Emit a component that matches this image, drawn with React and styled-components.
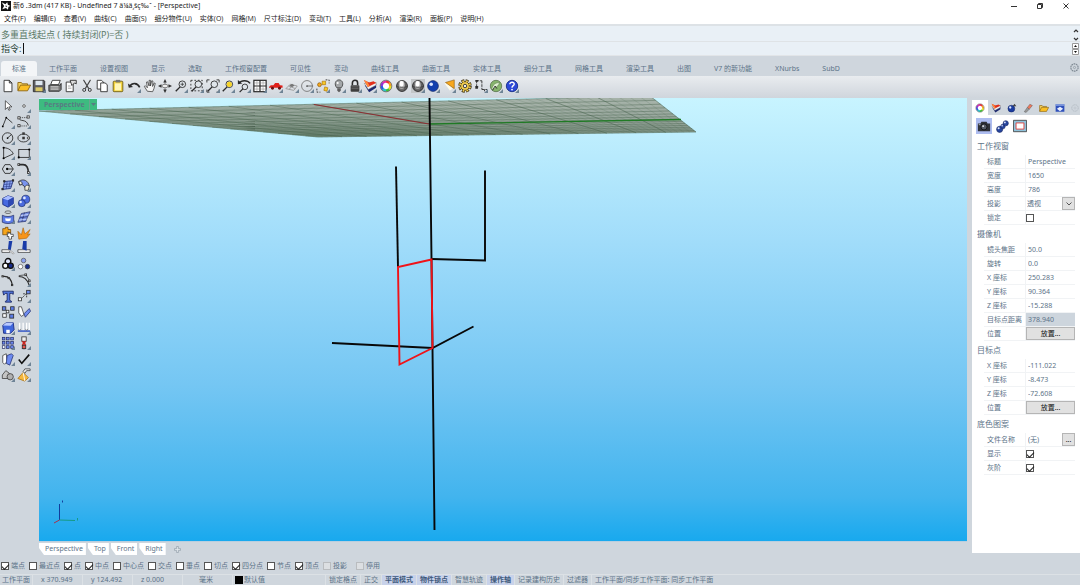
import React, { useState } from 'react';
import styled, { createGlobalStyle } from 'styled-components';

/* ---------- data ---------- */

const menus = ['文件(F)', '编辑(E)', '查看(V)', '曲线(C)', '曲面(S)', '细分物件(U)', '实体(O)', '网格(M)', '尺寸标注(D)', '变动(T)', '工具(L)', '分析(A)', '渲染(R)', '面板(P)', '说明(H)'];

const toolTabs = ['标准', '工作平面', '设置视图', '显示', '选取', '工作视窗配置', '可见性', '变动', '曲线工具', '曲面工具', '实体工具', '细分工具', '网格工具', '渲染工具', '出图', 'V7 的新功能', 'XNurbs', 'SubD'];

const viewTabs = ['Perspective', 'Top', 'Front', 'Right'];

const snaps = [
  ['端点', true], ['最近点', false], ['点', true], ['中点', true], ['中心点', false], ['交点', false],
  ['垂点', false], ['切点', false], ['四分点', true], ['节点', false], ['顶点', true],
];

const statusToggles = [
  ['锁定格点', false], ['正交', false], ['平面模式', true], ['物件锁点', true], ['智慧轨迹', false],
  ['操作轴', true], ['记录建构历史', false], ['过滤器', false],
];

/* ---------- icons (16 x 16 each) ---------- */

const K = '#2b2b2b';
const line = { fill: 'none', stroke: K, strokeWidth: 1 };
const corner = <path d="M16 11.5V16h-4.5z" fill="#6f8496" />;
const magnifier = <><circle cx="9.5" cy="6" r="3.8" fill="#dfe5ea" stroke={K} strokeWidth="1" /><path d="M7 9l-5 5" stroke={K} strokeWidth="1.600" /></>;
const ball = (x, y, r, c = '#2f55c8') => <><circle cx={x} cy={y} r={r} fill={c} stroke="#16245c" strokeWidth=".7" /><circle cx={x - r / 3} cy={y - r / 3} r={r / 3} fill="#dfe8ff" /></>;
const box = (x, y, s = 3.5, c = '#fff') => <rect x={x} y={y} width={s} height={s} fill={c} stroke={K} strokeWidth=".9" />;
const shaded = (
  <>
    <circle cx="8" cy="8" r="6.200" fill="#6d6d6d" stroke="#222" />
    <ellipse cx="7.500" cy="6.500" rx="4" ry="4.500" fill="#bdbdbd" />
    <ellipse cx="7.500" cy="5.500" rx="2.200" ry="3.200" fill="#fff" />
    <path d="M2 8.500c4 1.500 8 1.500 12 0" fill="none" stroke="#333" strokeWidth=".7" />
    <path d="M10.500 2.500c1.500 3 1.500 8 0 11M5 2.500c-1.500 3-1.500 8 0 11" fill="none" stroke="#444" strokeWidth=".7" />
  </>
);
const wheel = (
  <g fill="none" strokeWidth="2.800">
    <circle cx="8" cy="8" r="4" fill="#fff" />
    {['#e33', '#f5a11c', '#e8e021', '#3fc23a', '#2cc3c9', '#2c5be0', '#8a35d6', '#e02fa8'].map((c, i) => (
      <circle key={c} cx="8" cy="8" r="5" stroke={c} strokeDasharray="4.100 30" transform={`rotate(${i * 45 - 90} 8 8)`} />
    ))}
    <circle cx="8" cy="8" r="6.700" stroke="#444" strokeWidth=".7" />
  </g>
);
const layers = (
  <>
    <path d="M2 7l5 8 8-5V6z" fill="#1d2a70" />
    <path d="M1.500 5L6 12l9-5V4z" fill="#eef1f5" stroke="#555" strokeWidth=".5" />
    <path d="M1 1l4.500 8L15 4.500 12 2.500 7 4z" fill="#e2301c" />
    <path d="M1 1l4.500 8 2-1L5 3z" fill="#ff8a3c" />
  </>
);
const folder = <><path d="M1 13V4h4l1 1.500h6V7" fill="#f6d25c" stroke="#8a6410" /><path d="M1 13.500L4 7h11.500L12 13.500z" fill="#fbbf24" stroke="#8a6410" /></>;
const gear = <><circle cx="8" cy="8" r="6.500" fill="none" stroke="#7c8791" strokeWidth="2" strokeDasharray="3 1" /><circle cx="8" cy="8" r="2" fill="none" stroke="#7c8791" /></>;

const topIcons = [
  ['新建', <path d="M3.500 1.500h6l3 3v10h-9zM9.500 1.500v3h3" fill="#fff" stroke={K} />],
  ['打开', folder],
  ['保存', <><path d="M1.500 1.500h12l1 1v12h-13z" fill="#5c5c62" stroke={K} /><path d="M4 2h8v5H4z" fill="#dce6ef" /><path d="M4 9.500h8V14H4z" fill="#d8c766" />{corner}</>],
  ['打印', <><path d="M5 1.500h9l-2 5H3z" fill="#fff" stroke={K} /><path d="M1 7h13l1-2v7l-2 2H1z" fill="#777" stroke={K} /><path d="M3 9h9M3 11.500h9" stroke="#eee" /></>],
  ['属性', <><path d="M2.500 3.500h8v11h-8z" fill="#fff" stroke={K} /><path d="M7 1.500h7v4l-2-1-3 3z" fill="#ddd" stroke={K} /><path d="M4.500 8h3M4.500 10.500h4" stroke="#999" /></>],
  ['剪切', <><path d="M4 1l6 10M12 1L6 11" stroke="#444" strokeWidth="1.200" /><circle cx="4.800" cy="12.500" r="1.700" {...line} /><circle cx="11.200" cy="12.500" r="1.700" {...line} /></>],
  ['复制', <><path d="M2.500 1.500h5l2 2v8h-7z" fill="#fff" stroke={K} /><path d="M6.500 4.500h5l2.500 2v8H6.500z" fill="#fff" stroke={K} /></>],
  ['粘贴', <><rect x="2.500" y="2.500" width="11" height="12" rx="1" fill="#f3d23b" stroke="#6b5a13" /><path d="M4.500 5h7v8h-7z" fill="#fff6b8" /><path d="M5.500 1h5v3h-5z" fill="#777" /></>],
  ['撤销', <><path d="M1 5l1 5 5-1z" fill={K} /><path d="M3 8.500C6 4 12 4 14.500 9.500" fill="none" stroke={K} strokeWidth="1.800" />{corner}</>],
  ['平移', <path d="M5 14L1.500 8.500l1.200-.8L5 10 4 3.500l1.300-.3L7 8V1.500h1.500V8l1.500-6 1.300.3L11 8.500l1.800-4 1.200.5L12.500 11 11 14.500z" fill="#f4f4f4" stroke={K} strokeWidth=".8" />],
  ['旋转视图', <><path d="M8 3v10M3 8h10" stroke="#777" /><path d="M8 0l2 4H6zM8 16l-2-4h4zM0 8l4-2v4zM16 8l-4 2V6z" fill="#333" /><ellipse cx="8" cy="8" rx="3.500" ry="2" fill="#eee" stroke="#777" /></>],
  ['缩放', <>{magnifier}<path d="M7.500 6h4M9.500 8V4" stroke={K} strokeWidth=".8" />{corner}</>],
  ['框选缩放', <><path d="M1 1.500h13v12H1z" fill="none" stroke={K} strokeDasharray="2 2" />{magnifier}{corner}</>],
  ['缩放至范围', <><path d="M1 4V1h3M12 1h3v3M15 12v3h-3M4 15H1v-3" {...line} />{magnifier}{corner}</>],
  ['缩放选取物件', <>{magnifier}<circle cx="9.500" cy="6" r="3" fill="#f7d428" />{corner}</>],
  ['复原视图', <><path d="M1 1l0 5 5-1z" fill={K} /><path d="M2 5c3-4 10-4 13 0" fill="none" stroke={K} strokeWidth="1.600" /><circle cx="9" cy="9" r="3.200" fill="#dfe5ea" stroke={K} /><path d="M7 11l-4 4" stroke={K} strokeWidth="1.500" />{corner}</>],
  ['四视图', <><rect x="1" y="1.500" width="14" height="13" fill="#fff" stroke={K} strokeWidth="1.400" /><path d="M8 1v13M1 8h14" stroke={K} strokeWidth="1.400" /><path d="M2 4.500h12M2 11.500h12M4.500 2v12M11.500 2v12" stroke="#888" strokeWidth=".6" />{corner}</>],
  ['设置视图', <><path d="M0 9l2-2h3l2-2.500h4L12.500 7l3 .5V10H0z" fill="#e0201a" /><circle cx="4" cy="10.500" r="1.700" fill="#611" /><circle cx="12" cy="10.500" r="1.700" fill="#611" />{corner}</>],
  ['工作平面', <><path d="M1 11l5-5 8 2-4 5zM4 8l8 3M8 6l-3 6" fill="none" stroke="#999" /><path d="M5 7.500l3-2 3 2-3 2z" fill="#777" />{corner}</>],
  ['圆', <><circle cx="8" cy="8" r="6.200" {...line} stroke="#777" /><path d="M8 8h7" stroke="#666" /><circle cx="8" cy="8" r="1" fill="#555" />{corner}</>],
  ['选取', <><path d="M11 1h4v4M1 11v4h4" {...line} strokeDasharray="2 1.500" /><path d="M7 2.500h4v4H7zM10 9l3.500 1-1 4-3.500-1z" fill="#f7c926" stroke="#a66b00" strokeWidth=".7" /><circle cx="4" cy="6.500" r="2.200" fill="#f6a71c" stroke="#7c4b00" strokeWidth=".7" />{corner}</>],
  ['隐藏', <><path d="M5.500 10C2 6 4 1 8 1s6 5 2.500 9z" fill="#a4a7a9" stroke="#444" /><path d="M6 10.500h4v3L8 15l-2-1.500z" fill="#5d5d5d" /><circle cx="6.500" cy="4.500" r="1.200" fill="#fff" />{corner}</>],
  ['锁定', <><path d="M5 7V4.500a3 3 0 016 0V7" {...line} strokeWidth="1.800" /><rect x="3" y="7" width="10" height="7.500" rx="1" fill="#3e3e3e" /><path d="M4 9h8M4 11h8" stroke="#888" strokeWidth=".6" />{corner}</>],
  ['图层', <>{layers}{corner}</>],
  ['颜色', wheel],
  ['着色', shaded],
  ['线框', <><path d="M0 0h16v16H0z" fill="#c3c6c8" />{shaded}{corner}</>],
  ['渲染', <>{ball(8, 8, 6.2, '#123fae')}{corner}</>],
  ['灯光', <><path d="M3 5l5-1 4 7-3 2z" fill="#fffbe8" /><path d="M4 4l10-3 0 10z" fill="#f8a81e" stroke="#8c5b0b" strokeWidth=".7" />{corner}</>],
  ['选项', <><circle cx="8" cy="8" r="6" fill="none" stroke="#3f3315" strokeWidth="3.400" strokeDasharray="3.200 1.512" /><circle cx="8" cy="8" r="5" fill="#f3cf52" stroke="#4f3f10" /><circle cx="8" cy="8" r="5.800" fill="none" stroke="#f3cf52" strokeWidth="2" strokeDasharray="1.800 2.755" strokeDashoffset="-.7" /><circle cx="8" cy="8" r="2" fill="#eee" stroke={K} /></>],
  ['尺寸标注', <><path d="M3 2v7h2M3 2h6M9 2v10M9 12h6M12 12v2" {...line} strokeDasharray="3 1" /><path d="M1.500 8h3v3h-3zM1.500 1h3v2h-3z" fill={K} />{corner}</>],
  ['Grasshopper', <><circle cx="8" cy="8" r="6.500" fill="#86b56c" stroke="#607a55" /><path d="M3 12c1-6 5-8 9-8-1 4-3 5-5 6" fill="#dff0d2" stroke="#5b7a4c" strokeWidth=".7" /><path d="M4 13l3-5 2 3" {...line} />{corner}</>],
  ['说明', <><circle cx="8" cy="8" r="6.500" fill="#2c49d8" stroke="#132a85" /><path d="M5.500 6C5.500 2.800 10.800 3 10.500 6 10.300 7.600 8 7.700 8 10" fill="none" stroke="#fff" strokeWidth="1.600" /><circle cx="8" cy="12" r="1" fill="#fff" />{corner}</>],
];

const sideIcons = [
  ['选择', <path d="M5 2v10l2.500-2.500L9 13l1.500-.8L9 9h3.500z" fill="#fff" stroke={K} strokeWidth=".8" />],
  ['点', <><circle cx="8" cy="8" r="1.500" fill="#fff" stroke="#555" />{corner}</>],
  ['多重直线', <><path d="M2 13L6 3l7 6" {...line} />{corner}<circle cx="2" cy="13" r="1" /><circle cx="6" cy="3" r="1" /></>],
  ['控制点曲线', <><path d="M2.500 3C3 9 10 3 13 12" {...line} /><path d="M3 3l10 0M2.500 12.500h10" stroke={K} strokeWidth=".8" strokeDasharray="1.500 1" />{box(1, 2, 2.5)}{box(11.5, 1, 2.5)}{box(1, 11, 2.5)}{corner}</>],
  ['圆', <><circle cx="7.500" cy="8" r="6" {...line} /><path d="M7.500 8L12 4" stroke={K} /><circle cx="7.500" cy="8" r="1" />{corner}</>],
  ['椭圆', <><ellipse cx="7.500" cy="8" rx="6.500" ry="4.500" {...line} />{box(6.500, 2, 2)}{box(6.500, 7, 2)}<circle cx="13" cy="8" r="1.300" fill="#fff" stroke={K} />{corner}</>],
  ['圆弧', <><path d="M3 14V2c6 0 10 4 11 7L3 14" {...line} /><circle cx="3" cy="2" r="1.200" /><circle cx="3" cy="14" r="1.200" />{corner}</>],
  ['矩形', <><rect x="2" y="4" width="12" height="9" {...line} /><circle cx="2" cy="13" r="1.200" /><circle cx="14" cy="4" r="1.200" />{corner}</>],
  ['多边形', <><path d="M4.500 3h6L14 8l-3.500 5h-6L1.500 8z" {...line} /><path d="M7 8h7" stroke={K} /><circle cx="7" cy="8" r="1.300" />{corner}</>],
  ['曲线圆角', <><path d="M1 3h6c5 0 6 4 6 10" {...line} strokeWidth="1.800" />{box(1, 2, 2)}{box(12, 11, 2)}{corner}</>],
  ['角点曲面', <><path d="M4 4l10-1-3 9-9 1z" fill="#88a2f0" stroke="#20307c" /><path d="M7 4L6 12.500M10.500 3.500L9 12M3.500 7.500l9-1M3 10l9-.5" stroke="#20307c" strokeWidth=".6" />{box(3, 3, 1.5, K)}{box(13, 2, 1.5, K)}{box(1, 12, 1.5, K)}{corner}</>],
  ['放样', <><path d="M2 4c5-4 11-1 12 5l-5 2C8 8 6 7 3 8z" fill="#7a94ee" stroke="#222" strokeWidth=".8" /><path d="M2 4c3-1 4 1 4 3L3 8zM9 11c0-2 2-4 5-2l-1 5-4 0z" fill="#f1ecd8" stroke="#222" strokeWidth=".8" />{corner}</>],
  ['立方体', <><path d="M2 5l6-3 6 2v7l-6 4-6-3z" fill="#4668e0" stroke="#1a2c82" /><path d="M2 5l6 2 6-3-6-2z" fill="#a9bdff" /><path d="M8 7v8l6-4V4z" fill="#2d48b4" />{corner}</>],
  ['布尔运算', <>{ball(10, 6, 4.6, '#4a6ade')}{ball(5.500, 10.500, 4, '#4a6ade')}{corner}</>],
  ['投影曲线', <><ellipse cx="8" cy="2.500" rx="3.500" ry="1.500" {...line} stroke="#666" /><path d="M1.500 6c4 2 9 2 13 0v8c-4 2-9 2-13 0z" fill="#5c7ce6" stroke="#222b66" strokeWidth=".8" /><path d="M5 9c2 1 4 1 6 0v3c-2 1-4 1-6 0z" fill="#fff" />{corner}</>],
  ['网格', <><path d="M5 4l5-1 5-1-3 6-2 5-9 1 2-5z" fill="#7890e2" stroke="#222b66" strokeWidth=".8" /><path d="M3 9l9-1.500M8.500 3L5.500 13.500" stroke="#222b66" strokeWidth=".8" /><path d="M4 6.500l9-1.500M2 11.500l9-1" stroke="#dde4ff" strokeWidth=".8" />{corner}</>],
  ['组合', <><path d="M2 3h3V1.500h3V4h3v4H9V7H7v3H2z" fill="#f5a51b" stroke="#6b4100" strokeWidth=".8" /><path d="M8 8h3v1.500h3V12h-2v3H9v-3H7z" fill="#fff" stroke={K} strokeWidth=".8" /></>],
  ['炸开', <path d="M2 15L1 6l4 4L7 2l2 7 6-5-3 6 3-1-4 5z" fill="#f7941a" stroke="#a25a00" strokeWidth=".6" />],
  ['修剪', <><path d="M1 10h9v3H1z" fill="#fff" stroke={K} strokeWidth=".8" /><path d="M9 0h4l-2 11-3-2z" fill="#183ba8" /><path d="M10 10l5 4-1 1-5-4z" fill="#eee" stroke="#777" strokeWidth=".6" /></>],
  ['分割', <><path d="M1 10h14v3H1z" fill="#fff" stroke={K} strokeWidth=".8" /><path d="M7 0h4v11L6 9z" fill="#183ba8" /></>],
  ['群组', <><circle cx="8" cy="5" r="3.200" fill="#dfe6ff" stroke="#111" strokeWidth="1.600" /><circle cx="5" cy="10" r="3" fill="#fff" stroke="#111" strokeWidth="1.600" /><circle cx="11" cy="10" r="3" fill="#172c8a" stroke="#111" strokeWidth="1.600" />{corner}</>],
  ['解散群组', <><circle cx="7.500" cy="4" r="2.600" fill="#8aa0f0" stroke="#555" strokeWidth=".8" /><circle cx="4" cy="11" r="2.600" fill="#fff" stroke="#555" strokeWidth=".8" /><circle cx="12" cy="11" r="2.600" fill="#172c8a" stroke="#333" strokeWidth=".8" /></>],
  ['编辑点', <><path d="M2 4c7-1 10 4 11 10" {...line} strokeWidth="1.500" />{box(1, 3, 1.5)}{box(8, 5, 1.5)}{box(12, 13, 1.5)}</>],
  ['控制点', <><path d="M2 4c7 0 10 4 12 10" {...line} strokeWidth="1.400" /><path d="M2 3l8-1 4 6" {...line} strokeWidth=".8" />{box(9, 1, 2)}{box(13, 8, 2)}{corner}</>],
  ['文字', <path d="M2 2.500h12V6l-2-1h-2v8l2 1v1H5v-1l2-1V5H5L3 7z" fill="#5276dd" stroke="#1c2864" />],
  ['移动', <><path d="M5 11l5-5M7 5.500h4v4" {...line} strokeDasharray="2 1" />{box(1.500, 10, 3.5)}{box(11, 1.500, 4, '#6b8af0')}{corner}</>],
  ['阵列', <>{box(1.500, 2, 4, '#5c7ce6')}{box(6, 6, 3)}{box(11, 2, 4, '#5c7ce6')}{box(2, 10, 4)}{box(10, 10.500, 4.500, '#5c7ce6')}</>],
  ['定位', <><path d="M2 2h3l3 9-3 2-3-4z" fill="#fff" stroke={K} strokeWidth=".8" /><path d="M8 10l6-6 1.500 3-6 7z" fill="#6f8cf2" stroke="#1c2864" strokeWidth=".8" /></>],
  ['抽壳', <><path d="M2 5l4-3h8l1 8-4 4H3z" fill="#3f66dc" stroke="#1a2c82" /><path d="M2 5l4-3h8l-3 3.500z" fill="#b9c9ff" /><path d="M6 10h4v4H6z" fill="#fff" />{corner}</>],
  ['对齐', <><path d="M3 2v9M7 2v9M11 2v9M14 2v9" stroke="#fff" strokeWidth="1.500" /><path d="M1 11.500h14" stroke="#294fc4" strokeWidth="1.600" /><path d="M1.500 9L3 11l1.500-2M9.500 9l1.500 2 1.500-2" stroke="#666" fill="none" strokeWidth=".7" />{corner}</>],
  ['矩形阵列', <>{[1.5, 6.3, 11.1].map((y) => [1.5, 6.3, 11.1].map((x) => <rect key={x + '-' + y} x={x} y={y} width="3" height="3" fill={x < 3 && y > 10 ? '#fff' : '#6d8af0'} stroke="#222b66" strokeWidth=".8" />))}{corner}</>],
  ['镜像', <><path d="M8 1v14" stroke={K} strokeWidth="1.200" />{box(5.5, 1, 5, '#efefef')}{box(6, 10.5, 4, '#e9564e')}<path d="M6 6l4 4M10 6l-4 4" stroke="#d3221b" strokeWidth="1.500" />{corner}</>],
  ['弯曲', <><path d="M2 4l4-2 1 9-3 3-2-2z" fill="#fff" stroke={K} strokeWidth=".8" /><path d="M7 4l5-2 2 2-4 11-4-2z" fill="#6d8af0" stroke="#1c2864" strokeWidth=".8" />{corner}</>],
  ['检查', <><path d="M2 8.500l3.500 4.500L14 3" fill="none" stroke="#111" strokeWidth="1.800" />{corner}</>],
  ['实体', <><path d="M1.500 12V8l4-5 4 3v6z" fill="#c4c4c4" stroke={K} strokeWidth=".8" /><circle cx="10.500" cy="10" r="3.600" fill="#b0b0b0" stroke={K} strokeWidth=".8" />{corner}</>],
  ['分析', <><path d="M1 12l6-7 6 6-4 4z" fill="#f6b73c" stroke="#a06a10" strokeWidth=".8" /><path d="M7 5l2 10" stroke="#fff" /><path d="M7 4l2-3h6v2h-4L9 6z" fill="#eee" stroke={K} strokeWidth=".8" />{corner}</>],
];

const panelIcons = [
  ['属性', wheel],
  ['图层', layers],
  ['渲染', <>{ball(7, 9, 5.5, '#1b3da0')}<path d="M9 5l3-4 3 4z" fill="#444" /></>],
  ['材质', <><path d="M2 14l5-7 3 3-5 5z" fill="#999" stroke="#555" strokeWidth=".7" /><path d="M7 7l4-5 4 2-5 6z" fill="#f0775a" stroke="#555" strokeWidth=".7" /></>],
  ['图库', folder],
  ['说明', <><path d="M1 2h14v12H1z" fill="#2f50bb" /><path d="M1 2h14v2.500H1z" fill="#88a2e0" /><path d="M3 9l5-3 5 3-5 4z" fill="#e9efff" /></>],
];

/* ---------- ground grid in perspective ---------- */

/* maps the unit square onto the four screen corners of the construction plane */
const corners = [[279, 39], [657, 34], [611, -2], [0, 13]];
const project = (() => {
  const [[x0, y0], [x1, y1], [x2, y2], [x3, y3]] = corners;
  const dx1 = x1 - x2, dx2 = x3 - x2, sx = x0 - x1 + x2 - x3;
  const dy1 = y1 - y2, dy2 = y3 - y2, sy = y0 - y1 + y2 - y3;
  const det = dx1 * dy2 - dx2 * dy1;
  const g = (sx * dy2 - dx2 * sy) / det;
  const h = (dx1 * sy - sx * dy1) / det;
  return (u, v) => {
    const w = g * u + h * v + 1;
    const x = ((x1 - x0 + g * x1) * u + (x3 - x0 + h * x3) * v + x0) / w;
    const y = ((y1 - y0 + g * y1) * u + (y3 - y0 + h * y3) * v + y0) / w;
    return `${x.toFixed(2)} ${y.toFixed(2)}`;
  };
})();

const gridPath = (count, every) => {
  let d = '';
  for (let i = 0; i <= count; i += every) {
    const t = i / count;
    d += `M${project(t, 0)}L${project(t, 1)}M${project(0, t)}L${project(1, t)}`;
  }
  return d;
};

function Scene() {
  return (
    <Canvas viewBox="0 0 928 443" preserveAspectRatio="xMinYMin slice" role="img" aria-label="Perspective">
      <path d={`M${corners.map((c) => c.join(' ')).join('L')}Z`} fill="#b7bab2" fillOpacity=".85" />
      <path d={gridPath(70, 1)} stroke="#4f6a55" strokeOpacity=".34" strokeWidth=".5" />
      <path d={gridPath(70, 5)} stroke="#3d5a44" strokeOpacity=".6" strokeWidth=".6" />
      <path d="M275 6.500L390 26" stroke="#8c2f33" strokeWidth="1.200" />
      <path d="M390 26L642 21.500" stroke="#1f7a24" strokeWidth="1.300" />
      <g fill="none" stroke="#080808" strokeWidth="1.900">
        <path d="M390.500 0L392.500 161L393.500 250L395.500 432" />
        <path d="M357 68.500L359 169" />
        <path d="M392.500 161L446 162.500V72.500" />
        <path d="M293 245L393.500 250L434.500 228.500" />
      </g>
      <path d="M393.500 250L392.500 161.500L359 169L360.500 266.500Z" fill="none" stroke="#f01218" strokeWidth="1.900" />
      <g fill="none" strokeWidth="1">
        <path d="M20.500 422V406" stroke="#123d9c" />
        <path d="M20.500 422L36 422.500" stroke="#159b86" />
        <path d="M20.500 422L15 425" stroke="#a8324c" />
        <path d="M23.500 404.500v-2" stroke="#123d9c" />
        <path d="M38.500 420v2.500" stroke="#159b86" />
      </g>
    </Canvas>
  );
}

const Icon = ({ children, size = 14 }) => (
  <svg width={size} height={size} viewBox="0 0 16 16" aria-hidden="true">{children}</svg>
);

/* ---------- properties panel ---------- */

function Prop({ id, label, value, muted }) {
  return (
    <PropRow>
      <PropLabel htmlFor={id}>{label}</PropLabel>
      <PropInput id={id} defaultValue={value} $muted={muted} />
    </PropRow>
  );
}

function PlaceRow({ id }) {
  return (
    <PropRow>
      <PropLabel htmlFor={id}>位置</PropLabel>
      <PlaceButton id={id} type="button">放置...</PlaceButton>
    </PropRow>
  );
}

function PropCheck({ id, label, checked }) {
  return (
    <PropRow>
      <PropLabel htmlFor={id}>{label}</PropLabel>
      <CheckCell><Check id={id} type="checkbox" defaultChecked={checked} /></CheckCell>
    </PropRow>
  );
}

function Panel() {
  return (
    <Side>
      <PanelTabs>
        {panelIcons.map(([name, art], i) => (
          <PanelTab key={name} type="button" aria-label={name} $active={i === 0}><Icon size={10}>{art}</Icon></PanelTab>
        ))}
        <PanelGear type="button" aria-label="面板选项"><Icon size={8}>{gear}</Icon></PanelGear>
      </PanelTabs>
      <PanelBody>
        <PanelModes>
          <ModeButton type="button" aria-label="视图" $active>
            <Icon size={14}><path d="M1 5h3l1-2h6l1 2h3v9H1z" fill="#2f3238" /><circle cx="8" cy="9" r="3.500" fill="#555b66" stroke="#111" /><circle cx="7" cy="8" r="1" fill="#fff" /><path d="M2 6.500h2" stroke="#ccc" /></Icon>
          </ModeButton>
          <ModeButton type="button" aria-label="物件">
            <Icon size={13}>{ball(4.5, 11.5, 3.8, '#27459e')}{ball(8.5, 8, 2.8, '#27459e')}{ball(12, 4, 3.2, '#27459e')}</Icon>
          </ModeButton>
          <ModeButton type="button" aria-label="框架">
            <Icon size={14}><path d="M.5 1.500h15v13H.5z" fill="#8fc3dc" stroke="#444" /><path d="M3.500 4.500h9v7h-9z" fill="#fff" stroke="#e2403a" /></Icon>
          </ModeButton>
        </PanelModes>
        <Heading>工作视窗</Heading>
        <Prop id="title" label="标题" value="Perspective" />
        <Prop id="width" label="宽度" value="1650" />
        <Prop id="height" label="高度" value="786" />
        <PropRow>
          <PropLabel htmlFor="projection">投影</PropLabel>
          <SelectWrap>
            <PropSelect id="projection"><option>透视</option></PropSelect>
            <SelectArrow><svg width="6" height="4" viewBox="0 0 6 4"><path d="M.5.500L3 3 5.500.500" fill="none" stroke="#555" /></svg></SelectArrow>
          </SelectWrap>
        </PropRow>
        <PropCheck id="lock" label="锁定" />
        <Heading>摄像机</Heading>
        <Prop id="lens" label="镜头焦距" value="50.0" />
        <Prop id="rotation" label="旋转" value="0.0" />
        <Prop id="cam-x" label="X 座标" value="250.283" />
        <Prop id="cam-y" label="Y 座标" value="90.364" />
        <Prop id="cam-z" label="Z 座标" value="-15.288" />
        <Prop id="distance" label="目标点距离" value="378.940" muted />
        <PlaceRow id="cam-place" />
        <Heading>目标点</Heading>
        <Prop id="target-x" label="X 座标" value="-111.022" />
        <Prop id="target-y" label="Y 座标" value="-8.473" />
        <Prop id="target-z" label="Z 座标" value="-72.608" />
        <PlaceRow id="target-place" />
        <Heading>底色图案</Heading>
        <PropRow>
          <PropLabel htmlFor="wallpaper">文件名称</PropLabel>
          <PropInput id="wallpaper" defaultValue="(无)" />
          <BrowseButton type="button">...</BrowseButton>
        </PropRow>
        <PropCheck id="show" label="显示" checked />
        <PropCheck id="gray" label="灰阶" checked />
      </PanelBody>
    </Side>
  );
}

function App() {
  const [tab, setTab] = useState('标准');
  return (
    <>
      <GlobalStyle />
      <Window>
        <TitleBar>
          <Icon size={10}><path d="M0 0h16v16H0z" fill="#111" /><path d="M1 2l6 3 3-3 1 4 4 2-3 1-1 5-3-3-6 2 3-5z" fill="#fff" /><path d="M7 7l3 1-2 2z" fill="#111" /></Icon>
          <Title>新6 .3dm (417 KB) - Undefined 7 ä¼ä¸šç‰ˆ - [Perspective]</Title>
          <WindowButton type="button" aria-label="最小化"><svg width="8" height="8"><path d="M1 4.500h6" stroke="#333" /></svg></WindowButton>
          <WindowButton type="button" aria-label="还原"><svg width="8" height="8"><path d="M1.500 2.500h4v4h-4zM2.500 2.500v-1h4v4h-1" fill="none" stroke="#333" /></svg></WindowButton>
          <WindowButton type="button" aria-label="关闭"><svg width="8" height="8"><path d="M1.500 1.500l5 5M6.500 1.500l-5 5" stroke="#333" /></svg></WindowButton>
        </TitleBar>
        <MenuBar>
          {menus.map((m) => <MenuItem key={m} type="button">{m}</MenuItem>)}
        </MenuBar>

        <CommandArea>
          <History>
            <span>多重直线起点 ( 持续封闭(P)=否 )</span>
            <Arrows><svg width="6" height="14" viewBox="0 0 6 14"><path d="M1 4l2-2 2 2M1 10l2 2 2-2" fill="none" stroke="#333" strokeWidth="1.200" /></svg></Arrows>
          </History>
          <Prompt>
            <label htmlFor="command">指令:</label>
            <Caret />
            <CommandInput id="command" />
            <Arrows><svg width="7" height="12" viewBox="0 0 7 12"><path d="M.5.500h6v5h-6zM.5 6.500h6v5h-6z" fill="#fff" stroke="#999" /><path d="M2 4l1.500-2L5 4zM2 8l1.500 2L5 8z" fill="#111" /></svg></Arrows>
          </Prompt>
        </CommandArea>

        <TabBar>
          {toolTabs.map((t) => (
            <ToolTab key={t} type="button" $active={t === tab} onClick={() => setTab(t)}>{t}</ToolTab>
          ))}
          <GearButton type="button" aria-label="工具列选项"><Icon size={9}>{gear}</Icon></GearButton>
        </TabBar>
        <Toolbar>
          <ToolGrid>
            {topIcons.map(([name, art]) => <ToolButton key={name} type="button" aria-label={name}><Icon>{art}</Icon></ToolButton>)}
          </ToolGrid>
        </Toolbar>

        <Workspace>
          <SideTools>
            <SideGrid>
              {sideIcons.map(([name, art]) => <ToolButton key={name} type="button" aria-label={name}><Icon>{art}</Icon></ToolButton>)}
            </SideGrid>
          </SideTools>
          <Middle>
            <Viewport>
              <Scene />
              <ViewLabel type="button">
                <span>Perspective</span>
                <LabelArrow><svg width="5" height="3" viewBox="0 0 5 3"><path d="M0 0h5L2.500 3z" fill="#587c83" /></svg></LabelArrow>
              </ViewLabel>
            </Viewport>
            <ViewTabs>
              {viewTabs.map((v) => <ViewTab key={v} type="button">{v}</ViewTab>)}
              <AddView type="button" aria-label="新增工作视窗"><Icon size={7}><path d="M6 1h4v5h5v4h-5v5H6v-5H1V6h5z" fill="#e3e8ec" stroke="#8d9aa5" strokeWidth="1.500" /></Icon></AddView>
            </ViewTabs>
          </Middle>
          <Panel />
        </Workspace>

        <SnapBar>
          {snaps.map(([name, on]) => (
            <Snap key={name}><Check type="checkbox" defaultChecked={on} />{name}</Snap>
          ))}
          <Snap><Check type="checkbox" disabled />投影</Snap>
          <Snap $apart><Check type="checkbox" disabled />停用</Snap>
        </SnapBar>

        <StatusBar>
          <StatusCell>工作平面</StatusCell>
          <Coordinate>x 370.949</Coordinate>
          <Coordinate>y 124.492</Coordinate>
          <Coordinate>z 0.000</Coordinate>
          <Coordinate>毫米</Coordinate>
          <LayerCell><Swatch />默认值</LayerCell>
          {statusToggles.map(([name, on]) => <StatusToggle key={name} type="button" $on={on}>{name}</StatusToggle>)}
          <StatusText>工作平面/同步工作平面: 同步工作平面</StatusText>
        </StatusBar>
      </Window>
    </>
  );
}

/* ---------- styles ---------- */

const GlobalStyle = createGlobalStyle`
  * { box-sizing: border-box; }
  body {
    margin: 0;
    background: #cfd6dd;
    color: #5c7388;
    font-family: "Noto Sans", "Noto Sans CJK SC", sans-serif;
    font-size: 7px;
    line-height: 10px;
    overflow: hidden;
  }
  button, input, select {
    font: inherit;
    color: inherit;
    margin: 0;
    padding: 0;
    border: 0;
    background: none;
    border-radius: 0;
    outline: none;
  }
  button { white-space: nowrap; }
  svg { display: block; flex: none; }
`

const Window = styled.div`
  display: flex;
  flex-direction: column;
  min-height: 100vh;
`
const TitleBar = styled.header`
  display: flex;
  align-items: center;
  gap: 2px;
  height: 12px;
  padding: 0 2px 0 1px;
  background: #fff;
  color: #222;
`
const Title = styled.span`
  flex: 1;
`
const WindowButton = styled.button`
  display: flex;
  justify-content: center;
  width: 24px;
`
const MenuBar = styled.nav`
  display: flex;
  gap: 8px;
  height: 14px;
  padding: 1px 4px 0;
  background: #fff;
  border-bottom: 2px solid #dde2e6;
  font-family: "Open Sans", "Noto Sans CJK SC", sans-serif;
`
const MenuItem = styled.button`
  color: #222;
`
const CommandArea = styled.section`
  display: flex;
  flex-direction: column;
  background: #e9f0f6;
  border-bottom: 1px solid #e2e5e8;
  font-size: 9px;
`
const History = styled.div`
  display: flex;
  align-items: center;
  justify-content: space-between;
  height: 16px;
  padding: 2px 1px 0;
  color: #5b7a68;
  border-bottom: 1px solid #dfe3e6;
`
const Prompt = styled.div`
  display: flex;
  align-items: center;
  height: 13px;
  padding: 0 1px;
  color: #2d4438;
`
const Caret = styled.span`
  width: 1px;
  height: 11px;
  margin-left: 2px;
  background: #111;
`
const CommandInput = styled.input`
  flex: 1;
  min-width: 0;
`
const Arrows = styled.span`
  display: flex;
`
const TabBar = styled.nav`
  display: flex;
  align-items: flex-end;
  gap: 1px;
  height: 20px;
  padding: 0 1px;
`
const ToolTab = styled.button`
  height: 15px;
  padding: 0 11px;
  border-radius: 3px 3px 0 0;
  background: ${(p) => (p.$active ? '#f3f5f7' : 'transparent')};
`
const GearButton = styled.button`
  margin-left: auto;
  padding-bottom: 4px;
`
const Toolbar = styled.div`
  height: 22px;
  background: linear-gradient(#e9ecef, #cfd5dc);
`
const ToolGrid = styled.div`
  display: grid;
  grid-template-columns: repeat(33, 1fr);
  max-width: 520px;
  height: 19px;
`
const ToolButton = styled.button`
  display: flex;
  align-items: center;
  justify-content: center;
`
const Workspace = styled.main`
  display: flex;
  flex: 1;
`
const SideTools = styled.aside`
  width: 39px;
`
const SideGrid = styled.div`
  display: grid;
  grid-template-columns: repeat(2, 16px);
  grid-auto-rows: 1fr;
  height: 285px;
`
const Middle = styled.section`
  display: flex;
  flex-direction: column;
  flex: 1;
  min-width: 0;
`
const Viewport = styled.div`
  position: relative;
  flex: 1;
  overflow: hidden;
  background: linear-gradient(#c8f4ff, #a0dcfa 33%, #74c6f3 65%, #42b4ee 90%, #18a9ee);
`
const Canvas = styled.svg`
  position: absolute;
  inset: 0;
  width: 100%;
  height: 100%;
`
const ViewLabel = styled.button`
  position: absolute;
  top: 1px;
  left: 0;
  display: flex;
  align-items: center;
  height: 11px;
  padding-left: 5px;
  gap: 4px;
  background: #3dbb80;
  color: #587c83;
  font-weight: 700;
`
const LabelArrow = styled.span`
  display: flex;
  align-items: center;
  height: 11px;
  padding: 0 1px;
  border-left: 1px solid #6aa58f;
`
const ViewTabs = styled.nav`
  display: flex;
  align-items: flex-start;
  gap: 2px;
  height: 16px;
  padding-top: 1px;
  border-top: 1px solid #b9cfdf;
`
const ViewTab = styled.button`
  height: 12px;
  padding: 0 3px 0 6px;
  background: #fff;
  clip-path: polygon(0 0, 100% 0, 100% 100%, 5px 100%, 0 5px);
`
const AddView = styled.button`
  padding: 3px 6px;
`
const Side = styled.aside`
  display: flex;
  flex-direction: column;
  width: 108px;
  margin: 0 0 4px 5px;
`
const PanelTabs = styled.div`
  display: flex;
  height: 17px;
  padding-top: 2px;
`
const PanelTab = styled.button`
  display: flex;
  align-items: center;
  justify-content: center;
  width: 16px;
  background: ${(p) => (p.$active ? '#fff' : 'transparent')};
`
const PanelGear = styled.button`
  margin-left: auto;
  padding-right: 1px;
  opacity: .3;
`
const PanelBody = styled.div`
  flex: 1;
  padding: 3px 5px 0 4px;
  background: #fff;
`
const PanelModes = styled.div`
  display: flex;
  gap: 2px;
  height: 19px;
`
const ModeButton = styled.button`
  display: flex;
  align-items: center;
  justify-content: center;
  width: 16px;
  height: 16px;
  background: ${(p) => (p.$active ? '#aebdf0' : 'transparent')};
`
const Heading = styled.h2`
  margin: 0;
  padding-left: 1px;
  font-size: 8px;
  font-weight: 400;
  line-height: 18px;
`
const PropRow = styled.div`
  display: flex;
  align-items: stretch;
  height: 14px;
  margin-left: 8px;
  border-bottom: 1px solid #f1f3f5;
`
const PropLabel = styled.label`
  width: 42px;
  padding-left: 3px;
  line-height: 14px;
  white-space: nowrap;
  border-right: 1px solid #f1f3f5;
`
const PropInput = styled.input`
  flex: 1;
  min-width: 0;
  padding-left: 2px;
  background: ${(p) => (p.$muted ? '#cdd5dd' : 'transparent')};
`
const CheckCell = styled.span`
  display: flex;
  align-items: center;
`
const SelectWrap = styled.span`
  position: relative;
  display: flex;
  flex: 1;
`
const PropSelect = styled.select`
  flex: 1;
  padding-left: 1px;
  appearance: none;
`
const SelectArrow = styled.span`
  position: absolute;
  top: 0;
  right: 0;
  display: flex;
  align-items: center;
  justify-content: center;
  width: 13px;
  height: 13px;
  background: #e1e1e1;
  border: 1px solid #b5b5b5;
  pointer-events: none;
`
const PlaceButton = styled.button`
  flex: 1;
  background: #e1e1e1;
  border: 1px solid #b5b5b5;
  color: #111;
`
const BrowseButton = styled(PlaceButton)`
  flex: none;
  width: 13px;
`
const Check = styled.input`
  position: relative;
  flex: none;
  appearance: none;
  width: 8px;
  height: 8px;
  background: #fff;
  border: 1px solid #555;

  &:checked::before {
    content: '';
    position: absolute;
    top: 1px;
    left: 0;
    width: 6px;
    height: 3px;
    border: solid #222;
    border-width: 0 0 1px 1px;
    transform: rotate(-45deg);
  }
  &:disabled {
    background: #dcdfe2;
    border-color: #b9bcbf;
  }
`
const SnapBar = styled.div`
  display: flex;
  align-items: center;
  gap: 4px;
  height: 17px;
  padding: 0 1px;
`
const Snap = styled.label`
  display: flex;
  align-items: center;
  gap: 2px;
  margin-left: ${(p) => (p.$apart ? '5px' : '0')};
`
const StatusBar = styled.footer`
  display: flex;
  height: 11px;
  border-top: 1px solid #dce1e5;
  white-space: nowrap;
`
const StatusCell = styled.span`
  padding: 0 2px;
  border-right: 1px solid #dce1e5;
`
const Coordinate = styled(StatusCell)`
  width: 50px;
  padding: 0 8px;

  &:nth-child(5) {
    padding-left: 16px;
  }
`
const LayerCell = styled(StatusCell)`
  display: flex;
  align-items: center;
  gap: 1px;
  width: 93px;
`
const Swatch = styled.span`
  width: 8px;
  height: 8px;
  background: #000;
`
const StatusToggle = styled.button`
  padding: 0 3px;
  border-right: 1px solid #dce1e5;
  background: ${(p) => (p.$on ? '#c8d2ea' : 'transparent')};
  font-weight: ${(p) => (p.$on ? 700 : 400)};
  color: ${(p) => (p.$on ? '#3f5a7c' : 'inherit')};
`
const StatusText = styled.span`
  padding: 0 3px;
`

export default App
